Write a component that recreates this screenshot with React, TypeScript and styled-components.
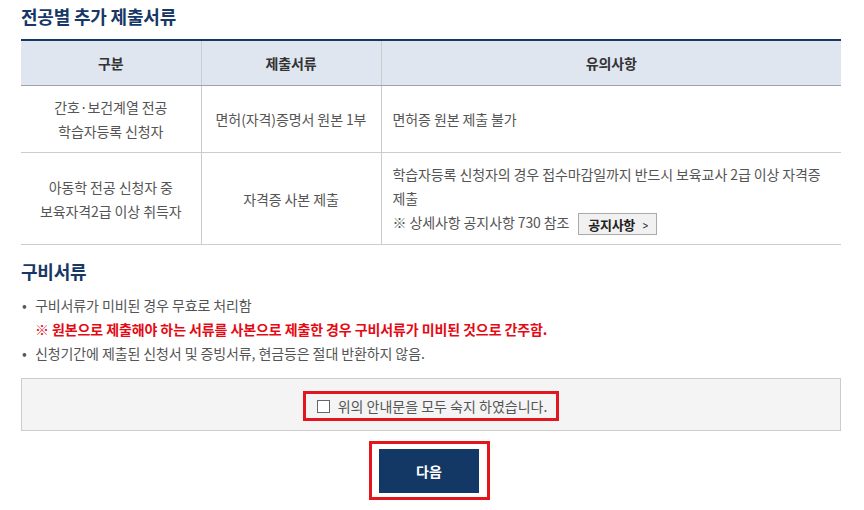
import styled, { createGlobalStyle } from "styled-components";
import { useState } from "react";

const GlobalStyle = createGlobalStyle`
    html, body {
        margin: 0;
        padding: 0;
        background: #ffffff;
    }
    body {
        font-family: "Noto Sans CJK KR", "Noto Sans", sans-serif;
        color: #555555;
    }
`;

const NAVY = "#173866";

export default function App() {
    const [agreed, setAgreed] = useState(false);

    return (
        <Page>
            <GlobalStyle />
            <SectionTitle>전공별 추가 제출서류</SectionTitle>
            <DocTable>
                <colgroup>
                    <col style={{ width: 180 }} />
                    <col style={{ width: 180 }} />
                    <col />
                </colgroup>
                <thead>
                    <tr>
                        <Th>구분</Th>
                        <Th>제출서류</Th>
                        <Th>유의사항</Th>
                    </tr>
                </thead>
                <tbody>
                    <tr>
                        <Td>
                            간호·보건계열 전공
                            <br />
                            학습자등록 신청자
                        </Td>
                        <Td>면허(자격)증명서 원본 1부</Td>
                        <Td $left>면허증 원본 제출 불가</Td>
                    </tr>
                    <tr>
                        <Td>
                            아동학 전공 신청자 중
                            <br />
                            보육자격2급 이상 취득자
                        </Td>
                        <Td>자격증 사본 제출</Td>
                        <Td $left>
                            학습자등록 신청자의 경우 접수마감일까지 반드시 보육교사 2급 이상 자격증
                            <br />
                            제출
                            <br />
                            ※ 상세사항 공지사항 730 참조
                            <NoticeButton type="button">
                                공지사항 <Chevron>&gt;</Chevron>
                            </NoticeButton>
                        </Td>
                    </tr>
                </tbody>
            </DocTable>

            <SectionTitle $second>구비서류</SectionTitle>
            <NoteList>
                <NoteItem>
                    구비서류가 미비된 경우 무효로 처리함
                    <Warning>※ 원본으로 제출해야 하는 서류를 사본으로 제출한 경우 구비서류가 미비된 것으로 간주함.</Warning>
                </NoteItem>
                <NoteItem>신청기간에 제출된 신청서 및 증빙서류, 현금등은 절대 반환하지 않음.</NoteItem>
            </NoteList>

            <AgreeBox>
                <Highlight as="label">
                    <CheckInput
                        type="checkbox"
                        checked={agreed}
                        onChange={(e) => setAgreed(e.target.checked)}
                    />
                    위의 안내문을 모두 숙지 하였습니다.
                </Highlight>
            </AgreeBox>

            <ButtonRow>
                <Highlight $button>
                    <NextButton type="button">다음</NextButton>
                </Highlight>
            </ButtonRow>
        </Page>
    );
}

const Page = styled.div`
    width: 820px;
    padding: 0 23px 0 21px;
`;

const SectionTitle = styled.h2<{ $second?: boolean }>`
    margin: ${(p) => (p.$second ? "13px 0 9px" : "3px 0 10px")};
    font-size: 18px;
    line-height: 26px;
    font-weight: 700;
    color: ${NAVY};
    letter-spacing: -0.2px;
`;

const DocTable = styled.table`
    width: 820px;
    border-collapse: collapse;
    table-layout: fixed;
    border-top: 2px solid ${NAVY};
    border-bottom: 1px solid #9ca3ad;
    font-size: 14px;
    letter-spacing: -0.1px;
`;

const Th = styled.th`
    height: 44px;
    padding: 0;
    background: #dfe6f0;
    color: #333333;
    font-weight: 700;
    text-align: center;
    border-bottom: 1px solid #9ca3ad;
    border-left: 1px solid #cccccc;
    &:first-child {
        border-left: none;
    }
`;

const Td = styled.td<{ $left?: boolean }>`
    padding: 9px 11px;
    line-height: 24px;
    color: #555555;
    text-align: ${(p) => (p.$left ? "left" : "center")};
    vertical-align: middle;
    border-bottom: 1px solid #cccccc;
    border-left: 1px solid #cccccc;
    &:first-child {
        border-left: none;
    }
`;

const NoticeButton = styled.button`
    display: inline-flex;
    align-items: center;
    gap: 7px;
    height: 22px;
    margin-left: 9px;
    padding: 0 8px 0 9px;
    vertical-align: middle;
    background: #f1f1f1;
    border: 1px solid #aaaaaa;
    border-radius: 0;
    font-family: inherit;
    font-size: 13px;
    font-weight: 700;
    color: #222222;
    letter-spacing: -0.3px;
    cursor: pointer;
`;

const Chevron = styled.span`
    font-size: 12px;
    font-weight: 400;
    transform: scaleX(0.8);
`;

const NoteList = styled.ul`
    margin: 0;
    padding: 0;
    list-style: none;
    font-size: 14px;
    line-height: 24px;
    letter-spacing: -0.1px;
`;

const NoteItem = styled.li`
    position: relative;
    padding-left: 14px;
    color: #555555;
    &::before {
        content: "•";
        position: absolute;
        left: 1px;
        top: 0;
        color: #555555;
    }
`;

const Warning = styled.span`
    display: block;
    color: #e50914;
    font-weight: 700;
`;

const AgreeBox = styled.div`
    display: flex;
    justify-content: center;
    margin-top: 13px;
    padding: 12px 0 9px;
    background: #f4f4f4;
    border: 1px solid #cccccc;
`;

const Highlight = styled.div<{ $button?: boolean }>`
    display: flex;
    align-items: center;
    gap: 8px;
    border: 3px solid #e3161f;
    padding: ${(p) => (p.$button ? "5px 8px 4px 7px" : "0 9px 0 11px")};
    height: ${(p) => (p.$button ? "auto" : "24px")};
    font-size: 14px;
    color: #555555;
    letter-spacing: 0;
    cursor: pointer;
`;

const CheckInput = styled.input`
    appearance: none;
    width: 13px;
    height: 13px;
    margin: 0;
    background: #ffffff;
    border: 1px solid #666666;
    cursor: pointer;
    &:checked {
        background: ${NAVY};
        border-color: ${NAVY};
    }
`;

const ButtonRow = styled.div`
    display: flex;
    justify-content: center;
    margin-top: 10px;
    padding-right: 3px;
`;

const NextButton = styled.button`
    width: 100px;
    height: 44px;
    border: none;
    background: #133865;
    color: #ffffff;
    font-family: inherit;
    font-size: 14px;
    font-weight: 700;
    cursor: pointer;
`;
